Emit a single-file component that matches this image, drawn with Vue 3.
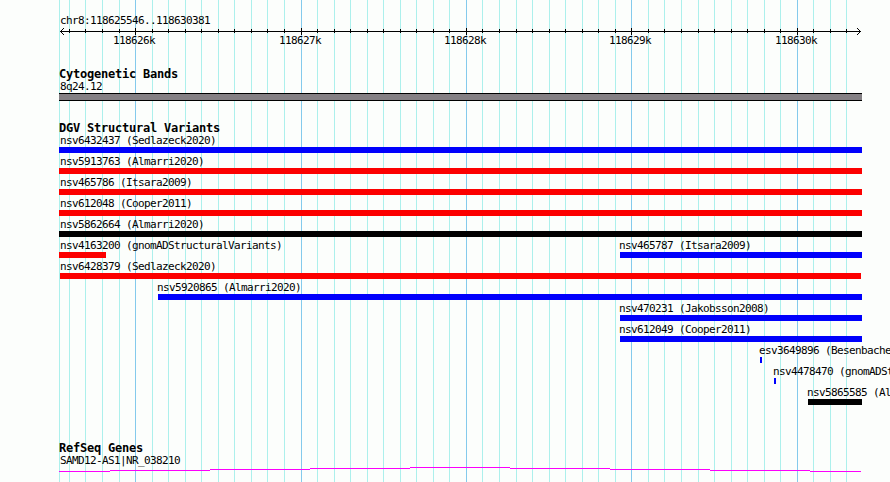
<template>
  <div class="browser">
    <svg class="gridlines" width="890" height="482" shape-rendering="crispEdges">
      <rect class="minor" x="59" y="0" width="1" height="482" />
      <rect
        v-for="line in gridLines"
        :key="line.x"
        :class="line.major ? 'major' : 'minor'"
        :x="line.x"
        y="0"
        width="1"
        height="482"
      />
    </svg>

    <div class="panel">
      <header class="ruler">
        <div class="label region">chr8:118625546..118630381</div>
        <svg class="axis" width="890" height="7" shape-rendering="crispEdges">
          <rect x="60" y="3" width="801" height="1" />
          <rect
            v-for="line in gridLines"
            :key="line.x"
            :x="line.x"
            :y="line.major ? 0 : 1"
            width="1"
            :height="line.major ? 7 : 4"
          />
          <path d="M60 3h1v1h-1zM61 2h1v3h-1zM62 1h1v1h-1zM62 5h1v1h-1zM63 0h1v1h-1zM63 6h1v1h-1z" />
          <path d="M860 3h1v1h-1zM859 2h1v3h-1zM858 1h1v1h-1zM858 5h1v1h-1zM857 0h1v1h-1zM857 6h1v1h-1z" />
        </svg>
        <div class="ticks">
          <span
            v-for="line in majorLines"
            :key="line.x"
            class="label tick"
            :style="{ marginLeft: line.x - 22 + 'px' }"
          >{{ line.name }}</span>
        </div>
      </header>

      <section class="track bands">
        <h2>Cytogenetic Bands</h2>
        <div class="label name">8q24.12</div>
        <div class="band"></div>
      </section>

      <section class="track variants">
        <h2>DGV Structural Variants</h2>
        <div v-for="(row, i) in rows" :key="i" class="row">
          <div
            v-for="v in row"
            :key="v.name"
            class="feature"
            :style="{ marginLeft: v.start + 'px' }"
          >
            <div class="label" :class="{ shifted: v.start > 60, edge: v.start === 60 }">{{ v.name }}</div>
            <div class="bar" :class="v.type" :style="{ width: v.end - v.start + 'px' }"></div>
          </div>
        </div>
      </section>

      <section class="track genes">
        <h2>RefSeq Genes</h2>
        <div class="label name">SAMD12-AS1|NR_038210</div>
        <svg class="gene" width="890" height="5" shape-rendering="crispEdges">
          <rect
            v-for="s in geneSteps"
            :key="s.x"
            :x="s.x"
            :y="s.y"
            :width="s.w"
            height="1"
          />
        </svg>
      </section>
    </div>
  </div>
</template>

<script setup>
const scale = 0.16542;

// one line every 100 bp, a darker one every 1000 bp
const gridLines = [];
for (let bp = -400; bp <= 4300; bp += 100) {
  gridLines.push({
    x: Math.floor(135.6 + bp * scale),
    major: bp % 1000 === 0,
    name: 118626 + bp / 1000 + 'k'
  });
}
const majorLines = gridLines.filter((line) => line.major);

const rows = [
  [{ name: 'nsv6432437 (Sedlazeck2020)', start: 59, end: 862, type: 'gain' }],
  [{ name: 'nsv5913763 (Almarri2020)', start: 59, end: 862, type: 'loss' }],
  [{ name: 'nsv465786 (Itsara2009)', start: 59, end: 862, type: 'loss' }],
  [{ name: 'nsv612048 (Cooper2011)', start: 59, end: 862, type: 'loss' }],
  [{ name: 'nsv5862664 (Almarri2020)', start: 59, end: 862, type: 'other' }],
  [
    { name: 'nsv4163200 (gnomADStructuralVariants)', start: 59, end: 106, type: 'loss' },
    { name: 'nsv465787 (Itsara2009)', start: 620, end: 862, type: 'gain' }
  ],
  [{ name: 'nsv6428379 (Sedlazeck2020)', start: 60, end: 861, type: 'loss' }],
  [{ name: 'nsv5920865 (Almarri2020)', start: 158, end: 862, type: 'gain' }],
  [{ name: 'nsv470231 (Jakobsson2008)', start: 620, end: 862, type: 'gain' }],
  [{ name: 'nsv612049 (Cooper2011)', start: 620, end: 862, type: 'gain' }],
  [{ name: 'esv3649896 (Besenbacher2016)', start: 760, end: 762, type: 'gain' }],
  [{ name: 'nsv4478470 (gnomADStructuralVariants)', start: 774, end: 776, type: 'gain' }],
  [{ name: 'nsv5865585 (Almarri2020)', start: 808, end: 862, type: 'other' }]
];

const geneSteps = [
  { x: 59, y: 4, w: 51 },
  { x: 110, y: 3, w: 100 },
  { x: 210, y: 2, w: 100 },
  { x: 310, y: 1, w: 100 },
  { x: 410, y: 0, w: 100 },
  { x: 510, y: 1, w: 100 },
  { x: 610, y: 2, w: 100 },
  { x: 710, y: 3, w: 100 },
  { x: 810, y: 4, w: 51 }
];
</script>

<style>
body {
  background: #fcfefc;
}
</style>

<style scoped>
.browser {
  position: relative;
  width: 890px;
  height: 482px;
  overflow: hidden;
  background: #fcfefc;
  color: #000;
}

.gridlines {
  position: absolute;
  top: 0;
  left: 0;
}

.minor {
  fill: #acf0ec;
}

.major {
  fill: #84caec;
}

.panel {
  position: relative;
}

svg {
  display: block;
}

.label {
  height: 13px;
  font: 11px/13px "DejaVu Sans Mono", monospace;
  letter-spacing: -0.622px;
  white-space: pre;
}

.ruler {
  height: 68px;
  padding-top: 14px;
  box-sizing: border-box;
}

.region,
.name {
  margin-left: 60px;
}

.axis {
  margin-top: 1px;
}

.ticks {
  display: grid;
  margin-top: -1px;
}

.tick {
  grid-area: 1 / 1;
}

h2 {
  height: 12px;
  margin: 0 0 0 59px;
  font: bold 12px/13px "DejaVu Sans Mono", monospace;
  letter-spacing: -0.224px;
  white-space: pre;
}

.bands {
  height: 54px;
}

.band {
  width: 803px;
  height: 8px;
  margin-left: 59px;
  box-sizing: border-box;
  border: solid #000;
  border-width: 1px 0;
  background: #848084;
}

.row {
  display: grid;
  height: 21px;
}

.feature {
  grid-area: 1 / 1;
}

.feature .label {
  width: 0;
  margin-left: 1px;
}

.feature .label.edge {
  margin-left: 0;
}

.feature .label.shifted {
  margin-left: -1px;
}

.bar {
  height: 6px;
}

.gain {
  background: #0000fc;
}

.loss {
  background: #fc0000;
}

.other {
  background: #000;
}

.variants {
  height: 320px;
}

.gene {
  fill: #fc00fc;
}
</style>
